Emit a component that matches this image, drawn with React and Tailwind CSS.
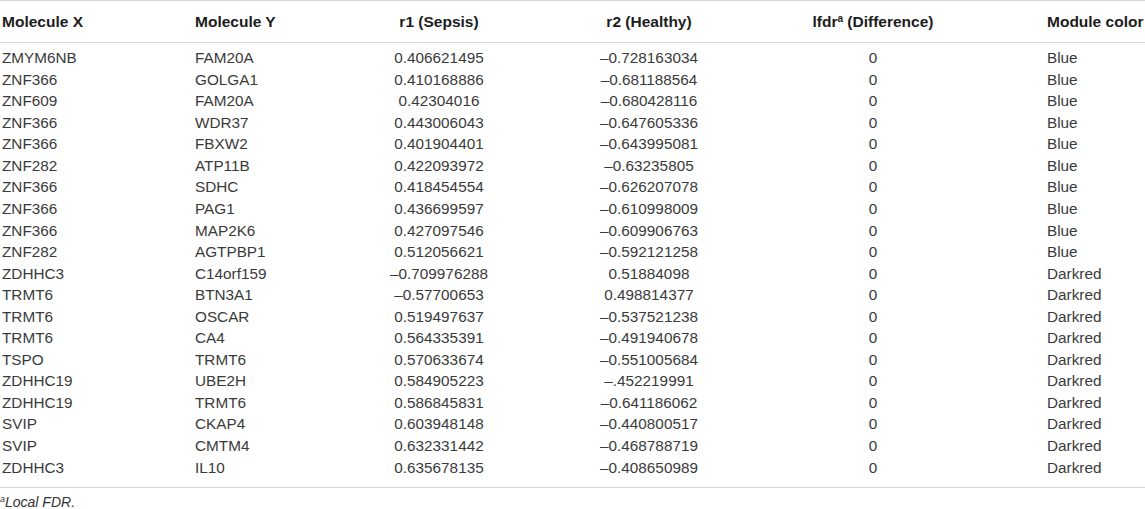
import React from 'react';

const ROWS = [
  ['ZMYM6NB', 'FAM20A', '0.406621495', '–0.728163034', '0', 'Blue'],
  ['ZNF366', 'GOLGA1', '0.410168886', '–0.681188564', '0', 'Blue'],
  ['ZNF609', 'FAM20A', '0.42304016', '–0.680428116', '0', 'Blue'],
  ['ZNF366', 'WDR37', '0.443006043', '–0.647605336', '0', 'Blue'],
  ['ZNF366', 'FBXW2', '0.401904401', '–0.643995081', '0', 'Blue'],
  ['ZNF282', 'ATP11B', '0.422093972', '–0.63235805', '0', 'Blue'],
  ['ZNF366', 'SDHC', '0.418454554', '–0.626207078', '0', 'Blue'],
  ['ZNF366', 'PAG1', '0.436699597', '–0.610998009', '0', 'Blue'],
  ['ZNF366', 'MAP2K6', '0.427097546', '–0.609906763', '0', 'Blue'],
  ['ZNF282', 'AGTPBP1', '0.512056621', '–0.592121258', '0', 'Blue'],
  ['ZDHHC3', 'C14orf159', '–0.709976288', '0.51884098', '0', 'Darkred'],
  ['TRMT6', 'BTN3A1', '–0.57700653', '0.498814377', '0', 'Darkred'],
  ['TRMT6', 'OSCAR', '0.519497637', '–0.537521238', '0', 'Darkred'],
  ['TRMT6', 'CA4', '0.564335391', '–0.491940678', '0', 'Darkred'],
  ['TSPO', 'TRMT6', '0.570633674', '–0.551005684', '0', 'Darkred'],
  ['ZDHHC19', 'UBE2H', '0.584905223', '–.452219991', '0', 'Darkred'],
  ['ZDHHC19', 'TRMT6', '0.586845831', '–0.641186062', '0', 'Darkred'],
  ['SVIP', 'CKAP4', '0.603948148', '–0.440800517', '0', 'Darkred'],
  ['SVIP', 'CMTM4', '0.632331442', '–0.468788719', '0', 'Darkred'],
  ['ZDHHC3', 'IL10', '0.635678135', '–0.408650989', '0', 'Darkred'],
];

// shared column template so header and body line up
const GRID = 'grid grid-cols-[195px_145px_198px_222px_226px_1fr] items-center';

function Row({ cells }) {
  return (
    <div className={`${GRID} h-[21.55px]`}>
      <span className="pl-[2px]">{cells[0]}</span>
      <span>{cells[1]}</span>
      <span className="text-center">{cells[2]}</span>
      <span className="text-center">{cells[3]}</span>
      <span className="text-center">{cells[4]}</span>
      <span className="pl-[61px]">{cells[5]}</span>
    </div>
  );
}

export default function App() {
  return (
    <div className="w-[1145px] h-[509px] bg-white text-[#3a3a3a] text-[15.3px] leading-none font-['Liberation_Sans',Arial,sans-serif] overflow-hidden">
      <div className="border-t border-b border-[#d6d6d6]">
        {/* Header */}
        <div className={`${GRID} h-[42px] pt-[1px] border-b border-[#dcdcdc] font-bold text-[#1c1c1c] text-[15.5px]`}>
          <span className="pl-[2px]">Molecule X</span>
          <span>Molecule Y</span>
          <span className="text-center">r1 (Sepsis)</span>
          <span className="text-center">r2 (Healthy)</span>
          <span className="text-center">
            lfdr<sup className="text-[10px] font-bold">a</sup> (Difference)
          </span>
          <span className="pl-[61px]">Module color</span>
        </div>

        {/* Body */}
        <div className="pt-[4px] pb-[9px]">
          {ROWS.map((r, i) => (
            <Row key={i} cells={r} />
          ))}
        </div>
      </div>

      <p className="mt-[7px] text-[14px] italic text-[#333]">
        <sup className="text-[9px]">a</sup>Local FDR.
      </p>
    </div>
  );
}
